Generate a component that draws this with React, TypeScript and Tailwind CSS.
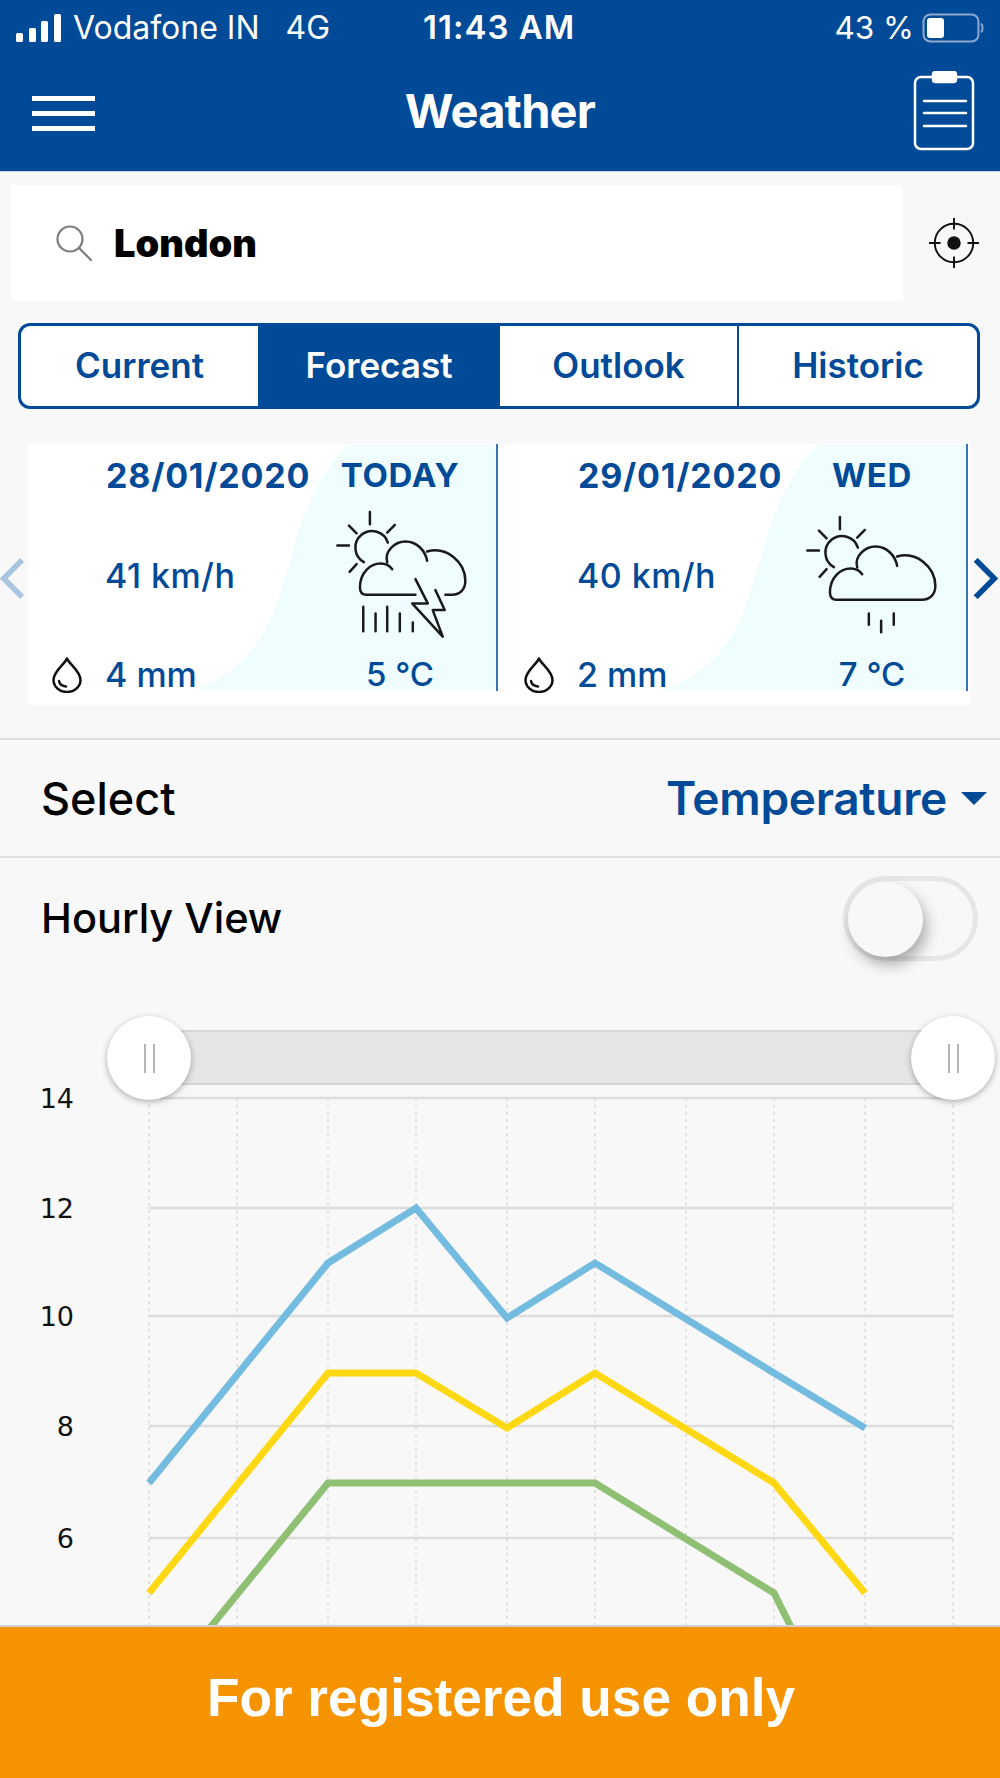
import React from 'react';

const NAVY = '#004a97';

const tabs = ['Current', 'Forecast', 'Outlook', 'Historic'];

const gridX = [149, 237, 328, 416, 507, 595, 686, 774, 865, 953];
const gridY = [
  { label: '14', y: 1098 },
  { label: '12', y: 1208 },
  { label: '10', y: 1316 },
  { label: '8', y: 1426 },
  { label: '6', y: 1538 },
];

const Sun = () => (
  <g>
    <path d="M1162 335A50 50 0 1 0 1090 394" />
    <path d="M1108 243V280M1160 305L1183 282M1045 284L1068 307M1010 344H1045M1047 423L1068 400" />
  </g>
);

const StormIcon = () => (
  <svg viewBox="1000 235 400 395" className="w-[133px] h-[132px]" fill="none" stroke="#1a1a1a" strokeWidth="7.5" strokeLinecap="round" strokeLinejoin="round">
    <Sun />
    <path d="M1245 492H1098Q1078 492 1078 470C1078 425 1110 398 1140 398C1155 398 1168 405 1175 415" />
    <path d="M1160 395C1150 360 1185 332 1215 332C1250 332 1275 360 1280 390" />
    <path d="M1280 362C1340 345 1395 395 1395 450C1395 475 1380 492 1355 492H1335" />
    <path d="M1245 445L1282 518H1235L1327 618L1297 538H1333L1305 478" />
    <path d="M1088 528V602M1125 548V602M1160 528V602M1198 548V602M1237 575V602" />
  </svg>
);

const RainIcon = () => (
  <svg viewBox="1000 235 400 395" className="w-[133px] h-[132px] mt-[10px] mr-[4px]" fill="none" stroke="#1a1a1a" strokeWidth="7.5" strokeLinecap="round" strokeLinejoin="round">
    <Sun />
    <path d="M1175 415C1168 405 1155 398 1140 398C1110 398 1078 425 1078 470Q1078 492 1098 492H1355C1380 492 1395 475 1395 450C1395 395 1340 345 1280 362" />
    <path d="M1160 395C1150 360 1185 332 1215 332C1250 332 1275 360 1280 390" />
    <path d="M1195 533V567M1232 555V590M1270 533V567" />
  </svg>
);

const Drop = () => (
  <svg viewBox="0 0 30 36" className="w-[30px] h-[36px] shrink-0" fill="none" stroke="#111" strokeWidth="2.5" strokeLinecap="round" strokeLinejoin="round">
    <path d="M15 1.5C13 7 1.5 14 1.5 23A13.5 12 0 0 0 28.5 23C28.5 14 17 7 15 1.5Z" />
    <path d="M7 24C7.5 27 10 29 14 29.5" />
  </svg>
);

interface IDayCard {
  date: string;
  day: string;
  wind: string;
  rain: string;
  temp: string;
  icon: React.ReactNode;
  contentClass?: string;
}

const DayCard = ({ date, day, wind, rain, temp, icon, contentClass = '' }: IDayCard) => (
  <div className="relative w-[470px] h-full shrink-0">
    {/* wave behind the card content */}
    <svg viewBox="0 0 1407 734" preserveAspectRatio="none" className="absolute left-0 top-px w-[469px] h-[245px]">
      <path d="M961 0C906 45 846 155 816 245C786 335 766 435 726 525C686 615 606 700 496 733L1407 733V0Z" fill="#effdff" />
    </svg>
    <div className="absolute right-0 top-0 w-[2px] h-[247px] bg-[#3a74b5]" />
    <div className={`relative grid grid-cols-[274px_196px] grid-rows-[36px_164px_36px] pt-[13px] text-[#004a97] ${contentClass}`}>
      <div className="pl-[78px] flex items-center text-[34px] font-bold tracking-[0.8px] whitespace-nowrap">{date}</div>
      <div className="flex items-center justify-center text-[33px] font-bold tracking-[0.7px] mt-[1px]">{day}</div>
      <div className="pl-[77px] flex items-center text-[34px] font-medium tracking-[0.5px]">{wind}</div>
      <div className="flex items-center justify-center">{icon}</div>
      <div className="pl-[24px] flex items-center gap-[23px] text-[34px] font-medium">
        <Drop />
        <span className="mt-[-2px]">{rain}</span>
      </div>
      <div className="flex items-center justify-center text-[33px] font-medium">{temp}</div>
    </div>
  </div>
);

const SliderHandle = ({ side }: { side: string }) => (
  <div className={`absolute ${side} top-[-16px] w-[84px] h-[84px] rounded-full bg-white shadow-[0_2px_6px_rgba(0,0,0,0.3)] flex items-center justify-center gap-[7px]`}>
    <div className="w-[2px] h-[29px] bg-[#b5b5b5]" />
    <div className="w-[2px] h-[29px] bg-[#b5b5b5]" />
  </div>
);

export default function App() {
  return (
    <div className="relative w-[1000px] h-[1778px] overflow-hidden bg-[#f8f8f8] font-['Inter',sans-serif]">
      {/* Header */}
      <header className="h-[172px] bg-[#004a97] text-white border-b border-[#c9d4e2]">
        <div className="h-[56px] flex items-center pl-[16px] pr-[16px]">
          <div className="w-[407px] flex items-center shrink-0">
            <svg viewBox="0 0 45 28" className="w-[45px] h-[28px] mt-[-1px]" fill="white">
              <rect x="0" y="19" width="7" height="9" rx="1.5" />
              <rect x="13" y="14" width="7" height="14" rx="1.5" />
              <rect x="25" y="7" width="7" height="21" rx="1.5" />
              <rect x="38" y="0" width="7" height="28" rx="1.5" />
            </svg>
            <span className="ml-[12px] text-[32px]">Vodafone IN</span>
            <span className="ml-[26px] text-[32px]">4G</span>
          </div>
          <span className="text-[33px] font-semibold tracking-[1px] whitespace-nowrap">11:43 AM</span>
          <span className="ml-auto text-[31.5px]">43 %</span>
          <svg viewBox="0 0 62 30" className="ml-[8px] w-[62px] h-[30px]" fill="none">
            <rect x="1.5" y="1.5" width="55" height="27" rx="7" stroke="#8fa9cc" strokeWidth="2" />
            <rect x="5" y="5" width="17" height="20" rx="3" fill="white" />
            <path d="M59 11C61 12 61 18 59 19" stroke="#8fa9cc" strokeWidth="2" />
          </svg>
        </div>
        <div className="relative h-[114px] flex items-center justify-center">
          <div className="absolute left-[32px] top-[40px] w-[63px] flex flex-col gap-[10px]">
            <div className="h-[5px] bg-white" />
            <div className="h-[5px] bg-white" />
            <div className="h-[5px] bg-white" />
          </div>
          <span className="text-[47px] font-bold tracking-[-0.8px] mt-[-4px]">Weather</span>
          <svg viewBox="0 0 62 80" className="absolute left-[913px] top-[15px] w-[62px] h-[80px]" fill="none" stroke="white" strokeWidth="2.5" strokeLinecap="round">
            <rect x="2" y="6" width="58" height="72" rx="6" />
            <rect x="20" y="1" width="23" height="10" rx="2.5" fill="white" />
            <path d="M11 30H53M11 42H53M11 55H53" />
          </svg>
        </div>
      </header>

      {/* Search */}
      <div className="flex items-center mt-[13px] pl-[11px]">
        <div className="w-[892px] h-[116px] bg-white flex items-center pl-[45px] gap-[22px]">
          <svg viewBox="0 0 36 36" className="w-[36px] h-[36px]" fill="none" stroke="#7d7d7d" strokeWidth="2.2" strokeLinecap="round">
            <circle cx="14" cy="14" r="12.5" />
            <path d="M23 23L35 35" />
          </svg>
          <span className="text-[38px] font-black text-black mt-[1px]">London</span>
        </div>
        <svg viewBox="0 0 52 52" className="ml-[26px] w-[50px] h-[50px]" fill="none" stroke="#111" strokeWidth="2">
          <circle cx="26" cy="26" r="20" />
          <circle cx="26" cy="26" r="7" fill="#111" stroke="none" />
          <path d="M26 0V12M26 40V52M0 26H12M40 26H52" />
        </svg>
      </div>

      {/* Tabs */}
      <div className="grid grid-cols-[237px_242px_239px_1fr] mt-[22px] ml-[18px] mr-[20px] h-[86px] border-[3px] border-[#004a97] rounded-[12px] overflow-hidden bg-white">
        {tabs.map((t, i) => (
          <div
            key={t}
            className={`flex items-center justify-center pb-[2px] text-[35px] font-semibold ${t === 'Forecast' ? 'bg-[#004a97] text-white' : 'text-[#004a97]'} ${i === 2 ? 'border-r-2 border-[#004a97]' : ''}`}
          >
            {t}
          </div>
        ))}
      </div>

      {/* Day cards */}
      <div className="flex items-center mt-[35px] h-[261px]">
        <svg viewBox="0 0 26 44" className="w-[24px] h-[41px] mr-[4px] mt-[8px] shrink-0" fill="none" stroke="#a9c5df" strokeWidth="6">
          <path d="M24 2L4 22L24 42" />
        </svg>
        <div className="flex w-[942px] h-full bg-white">
          <DayCard date="28/01/2020" day="TODAY" wind="41 km/h" rain="4 mm" temp="5 °C" icon={<StormIcon />} />
          <DayCard date="29/01/2020" day="WED" wind="40 km/h" rain="2 mm" temp="7 °C" icon={<RainIcon />} contentClass="ml-[2px]" />
        </div>
        <svg viewBox="0 0 26 44" className="w-[26px] h-[41px] ml-[2px] mt-[8px] shrink-0" fill="none" stroke={NAVY} strokeWidth="6">
          <path d="M3 2L23 22L3 42" />
        </svg>
      </div>

      {/* Select */}
      <div className="mt-[33px] h-[120px] border-y-2 border-[#dedede] flex items-center justify-between pl-[41px] pr-[13px]">
        <span className="text-[45px] font-medium text-black mt-[1px]">Select</span>
        <div className="flex items-center gap-[14px]">
          <span className="text-[46px] font-semibold text-[#004a97] tracking-[-0.3px]">Temperature</span>
          <svg viewBox="0 0 26 13" className="w-[26px] h-[13px]" fill={NAVY}>
            <path d="M0 0H26L13 13Z" />
          </svg>
        </div>
      </div>

      {/* Hourly toggle */}
      <div className="flex items-center justify-between pl-[41px] pr-[22px] mt-[17px] h-[86px]">
        <span className="text-[41.5px] font-medium text-black">Hourly View</span>
        <div className="relative w-[135px] h-[85px] rounded-full border-[5px] border-[#e6e6e6]">
          <div className="absolute left-0 top-px w-[75px] h-[75px] rounded-full bg-[#f8f8f8] shadow-[4px_8px_14px_rgba(0,0,0,0.3)]" />
        </div>
      </div>

      {/* Range slider */}
      <div className="relative z-10 mt-[69px] h-[55px] mx-[149px] w-[804px] bg-[#e5e5e5] border-y-2 border-[#d6d6d6]">
        <SliderHandle side="left-[-42px]" />
        <SliderHandle side="right-[-42px]" />
      </div>

      {/* Chart */}
      <svg viewBox="0 1070 1000 560" className="block w-[1000px] h-[560px] mt-[-15px]">
        {gridX.map((x) => (
          <line key={x} x1={x} x2={x} y1={1098} y2={1627} stroke="#d9d9d9" strokeWidth="1.5" strokeDasharray="3 4" />
        ))}
        {gridY.map((g) => (
          <g key={g.label}>
            <line x1={149} x2={953} y1={g.y} y2={g.y} stroke="#dcdcdc" strokeWidth="2.5" />
            <text x={74} y={g.y + 10} textAnchor="end" fontSize="27" fill="#111" fontFamily="'DejaVu Sans', sans-serif">
              {g.label}
            </text>
          </g>
        ))}
        <polyline fill="none" stroke="#74bbe0" strokeWidth="7" strokeLinejoin="miter" points="149,1483 328,1263 416,1208 507,1318 595,1263 774,1373 865,1428" />
        <polyline fill="none" stroke="#ffd814" strokeWidth="7" strokeLinejoin="miter" points="149,1593 328,1373 416,1373 507,1428 595,1373 774,1483 865,1593" />
        <polyline fill="none" stroke="#8fbf72" strokeWidth="7" strokeLinejoin="miter" points="200,1640 328,1483 595,1483 774,1593 800,1645" />
      </svg>

      {/* Bottom banner */}
      <div className="absolute left-0 bottom-0 w-full h-[153px] bg-[#f59300] border-t-2 border-[#d0d0d0] flex items-center justify-center pb-[10px]">
        <span className="text-[53.2px] font-bold text-white font-['Liberation_Sans',sans-serif] ml-[2px]">For registered use only</span>
      </div>
    </div>
  );
}
